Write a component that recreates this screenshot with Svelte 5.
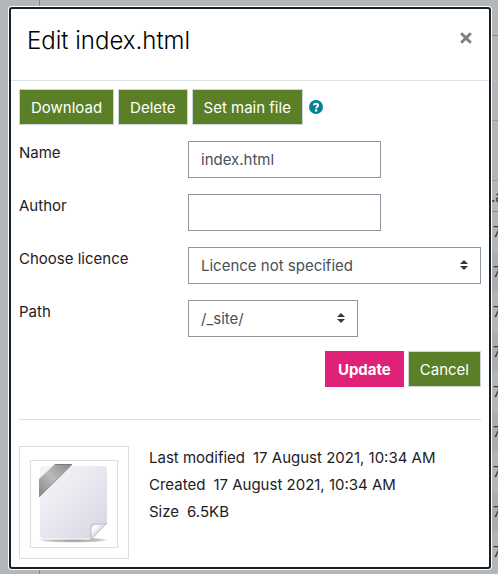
<script>
  let name = $state('index.html');
  let author = $state('');
  let licence = $state('Licence not specified');
  let path = $state('/_site/');
  const rows = Array.from({ length: 9 });
  const details = [
    ['Last modified', '17 August 2021, 10:34 AM'],
    ['Created', '17 August 2021, 10:34 AM'],
    ['Size', '6.5KB']
  ];
</script>

<div class="page">
  <div class="backdrop" aria-hidden="true">
    <div class="manager"></div>
    <div class="listing">
      <div class="toolbar"></div>
      <div class="crumbs"></div>
      <div class="heading">.a</div>
      {#each rows as _, i}
        <div class="row" class:alt={i % 2 === 1}>7</div>
      {/each}
    </div>
  </div>

  <div class="dialog" role="dialog" aria-labelledby="title">
    <header>
      <h3 id="title">Edit index.html</h3>
      <button class="close" type="button" aria-label="Close">
        <svg width="12" height="12" viewBox="0 0 12 12"><path d="M1.200 1.200 10.800 10.800M10.800 1.200 1.200 10.800" stroke="#808080" stroke-width="2.900" /></svg>
      </button>
    </header>
    <form onsubmit={(e) => e.preventDefault()}>
      <div class="actions">
        <button class="btn" type="button">Download</button>
        <button class="btn" type="button">Delete</button>
        <button class="btn" type="button">Set main file</button>
        <a class="help" href="#help" aria-label="Help with main file">
          <svg width="14" height="14" viewBox="0 0 14 14">
            <circle cx="7" cy="7" r="7" fill="#008196" />
            <path d="M4.700 5.300C5 4.200 5.900 3.700 7 3.700c1.300 0 2.200.6 2.200 1.600 0 1.500-2.100 1.500-2.100 3.100" fill="none" stroke="#fff" stroke-width="1.900" />
            <circle cx="7.100" cy="10.500" r="1.200" fill="#fff" />
          </svg>
        </a>
      </div>

      <div class="fields">
        <div class="field">
          <label for="name">Name</label>
          <div><input id="name" type="text" bind:value={name} /></div>
        </div>
        <div class="field">
          <label for="author">Author</label>
          <div><input id="author" type="text" bind:value={author} /></div>
        </div>
        <div class="field">
          <label for="licence">Choose licence</label>
          <div class="pick wide">
            <select id="licence" bind:value={licence}><option>Licence not specified</option></select>
            <svg width="8" height="10" viewBox="0 0 8 10"><path d="M4 0 8 4H0zM4 10 0 6h8z" fill="#343a40" /></svg>
          </div>
        </div>
        <div class="field">
          <label for="path">Path</label>
          <div class="pick">
            <select id="path" bind:value={path}><option>/_site/</option></select>
            <svg width="8" height="10" viewBox="0 0 8 10"><path d="M4 0 8 4H0zM4 10 0 6h8z" fill="#343a40" /></svg>
          </div>
        </div>
      </div>

      <div class="submit">
        <button class="btn primary" type="submit">Update</button>
        <button class="btn" type="button">Cancel</button>
      </div>
    </form>
    <hr />
    <div class="info">
      <div class="thumb">
        <div class="frame">
          <svg width="86" height="86" viewBox="0 0 86 86">
            <defs>
              <linearGradient id="paper" x1="0" y1="0" x2="1" y2="1"><stop offset="0" stop-color="#f4f4f7" /><stop offset=".4" stop-color="#ebebf2" /><stop offset="1" stop-color="#d3d5e1" /></linearGradient>
              <linearGradient id="ribbon" x1="0" y1="1" x2="1" y2="0"><stop offset="0" stop-color="#858585" /><stop offset=".5" stop-color="#bababa" /><stop offset="1" stop-color="#888" /></linearGradient>
              <linearGradient id="curl" x1="0" y1="0" x2="1" y2="1"><stop offset="0" stop-color="#cfd1d8" /><stop offset=".25" stop-color="#fff" /><stop offset=".5" stop-color="#d9dbe2" /><stop offset=".62" stop-color="#a6a8b0" /></linearGradient>
              <radialGradient id="shade"><stop offset="0" stop-color="#777" stop-opacity=".85" /><stop offset=".75" stop-color="#999" stop-opacity=".5" /><stop offset="1" stop-color="#fff" stop-opacity="0" /></radialGradient>
            </defs>
            <ellipse cx="42.500" cy="79" rx="38" ry="3" fill="url(#shade)" />
            <path d="M12 5H73q3 0 3 3V62L60 78.500H12q-3 0-3-3V8q0-3 3-3z" fill="url(#paper)" />
            <path d="M9.500 75q0 3 3 3H60" fill="none" stroke="#fafafc" stroke-width="1" />
            <path d="M76 62 60 78.500V66q0-3 3-3q9 1 13-1z" fill="url(#curl)" stroke="#a9abb4" stroke-width=".7" />
            <path d="M24 3H41L8 36V18z" fill="url(#ribbon)" />
            <path d="M24 3.500H41L8 36" fill="none" stroke="#777" stroke-width=".8" />
          </svg>
        </div>
      </div>
      <dl>
        {#each details as [term, value]}
          <div><dt>{term}</dt><dd>{value}</dd></div>
        {/each}
      </dl>
    </div>
  </div>
</div>

<style>
  :global(body) { margin: 0; background: #b3b7ba; }
  .page, .page * { box-sizing: border-box; }
  .page {
    position: relative;
    min-height: 100vh;
    padding: 7px 7px 5px 9px;
    overflow: hidden;
    background: #b3b7ba;
    color: #1d2125;
    font: 15px/23px Inter, "Liberation Sans", sans-serif;
  }
  .backdrop { position: absolute; inset: 0; color: #35393c; }
  .manager { position: absolute; inset: 0 auto 0 39px; border-left: 1px solid #85898d; }
  .listing { position: absolute; inset: 0 0 0 auto; width: 7px; overflow: hidden; }
  .toolbar { height: 36px; border-bottom: 1px solid #85898d; }
  .crumbs { height: 145px; border-bottom: 1px solid #9a9ea2; background: linear-gradient(#9a9ea2, #9a9ea2) 0 84px / 100% 1px no-repeat; }
  .heading { height: 31px; line-height: 32px; border-bottom: 1px solid #85898d; }
  .row { height: 40px; padding-left: 2px; line-height: 40px; }
  .alt { background: #abafb2; }
  .dialog {
    position: relative;
    border: 2px solid #1a1f25;
    border-radius: 3px;
    box-shadow: 0 0 0 1px #fff;
    background: #fff;
  }
  header {
    display: flex;
    justify-content: space-between;
    align-items: flex-start;
    height: 72px;
    padding: 16px;
    border-bottom: 1px solid #dee2e6;
  }
  h3 { margin: 0; font-size: 24px; line-height: 32px; font-weight: 300; color: #000; }
  .close { display: flex; margin: 7px 1px 0 0; padding: 0; border: 0; background: none; }
  form { padding: 8px 8px 0; }
  .actions, .submit { display: flex; gap: 4px; }
  .btn {
    height: 36px;
    padding: 0 11px;
    border: 1px solid #ced4da;
    background: #5b7f26;
    color: #fff;
    font: inherit;
    white-space: nowrap;
  }
  .primary { padding: 0 12px; border-color: #df2177; background: #df2177; font-weight: 700; }
  .help { display: flex; align-items: center; margin-left: 2px; }
  .fields { display: grid; gap: 16px; margin-top: 16px; }
  .field { display: grid; grid-template-columns: 169px 1fr; }
  input, select {
    display: block;
    height: 37px;
    padding: 0 12px;
    border: 1px solid #8f959e;
    border-radius: 0;
    background: #fff;
    color: #495057;
    font: inherit;
  }
  input { width: 193px; }
  select { width: 100%; appearance: none; }
  .pick { position: relative; width: 170px; }
  .wide { width: 100%; }
  .pick svg { position: absolute; right: 13px; top: 13px; pointer-events: none; }
  .submit { justify-content: flex-end; margin-top: 14px; }
  hr { margin: 32px 8px 26px; border: 0; border-top: 1px solid #dfdfdf; }
  .info { display: flex; gap: 20px; padding: 0 8px 8px; }
  .thumb { flex: none; height: 113px; padding: 13px 10px 0; border: 1px solid #ddd; }
  .frame { width: 88px; height: 88px; border: 1px solid #ddd; }
  .frame svg { display: block; }
  dl { margin: 0; }
  dl div { display: flex; gap: 8px; height: 27px; line-height: 23px; }
  dd { margin: 0; }
</style>
